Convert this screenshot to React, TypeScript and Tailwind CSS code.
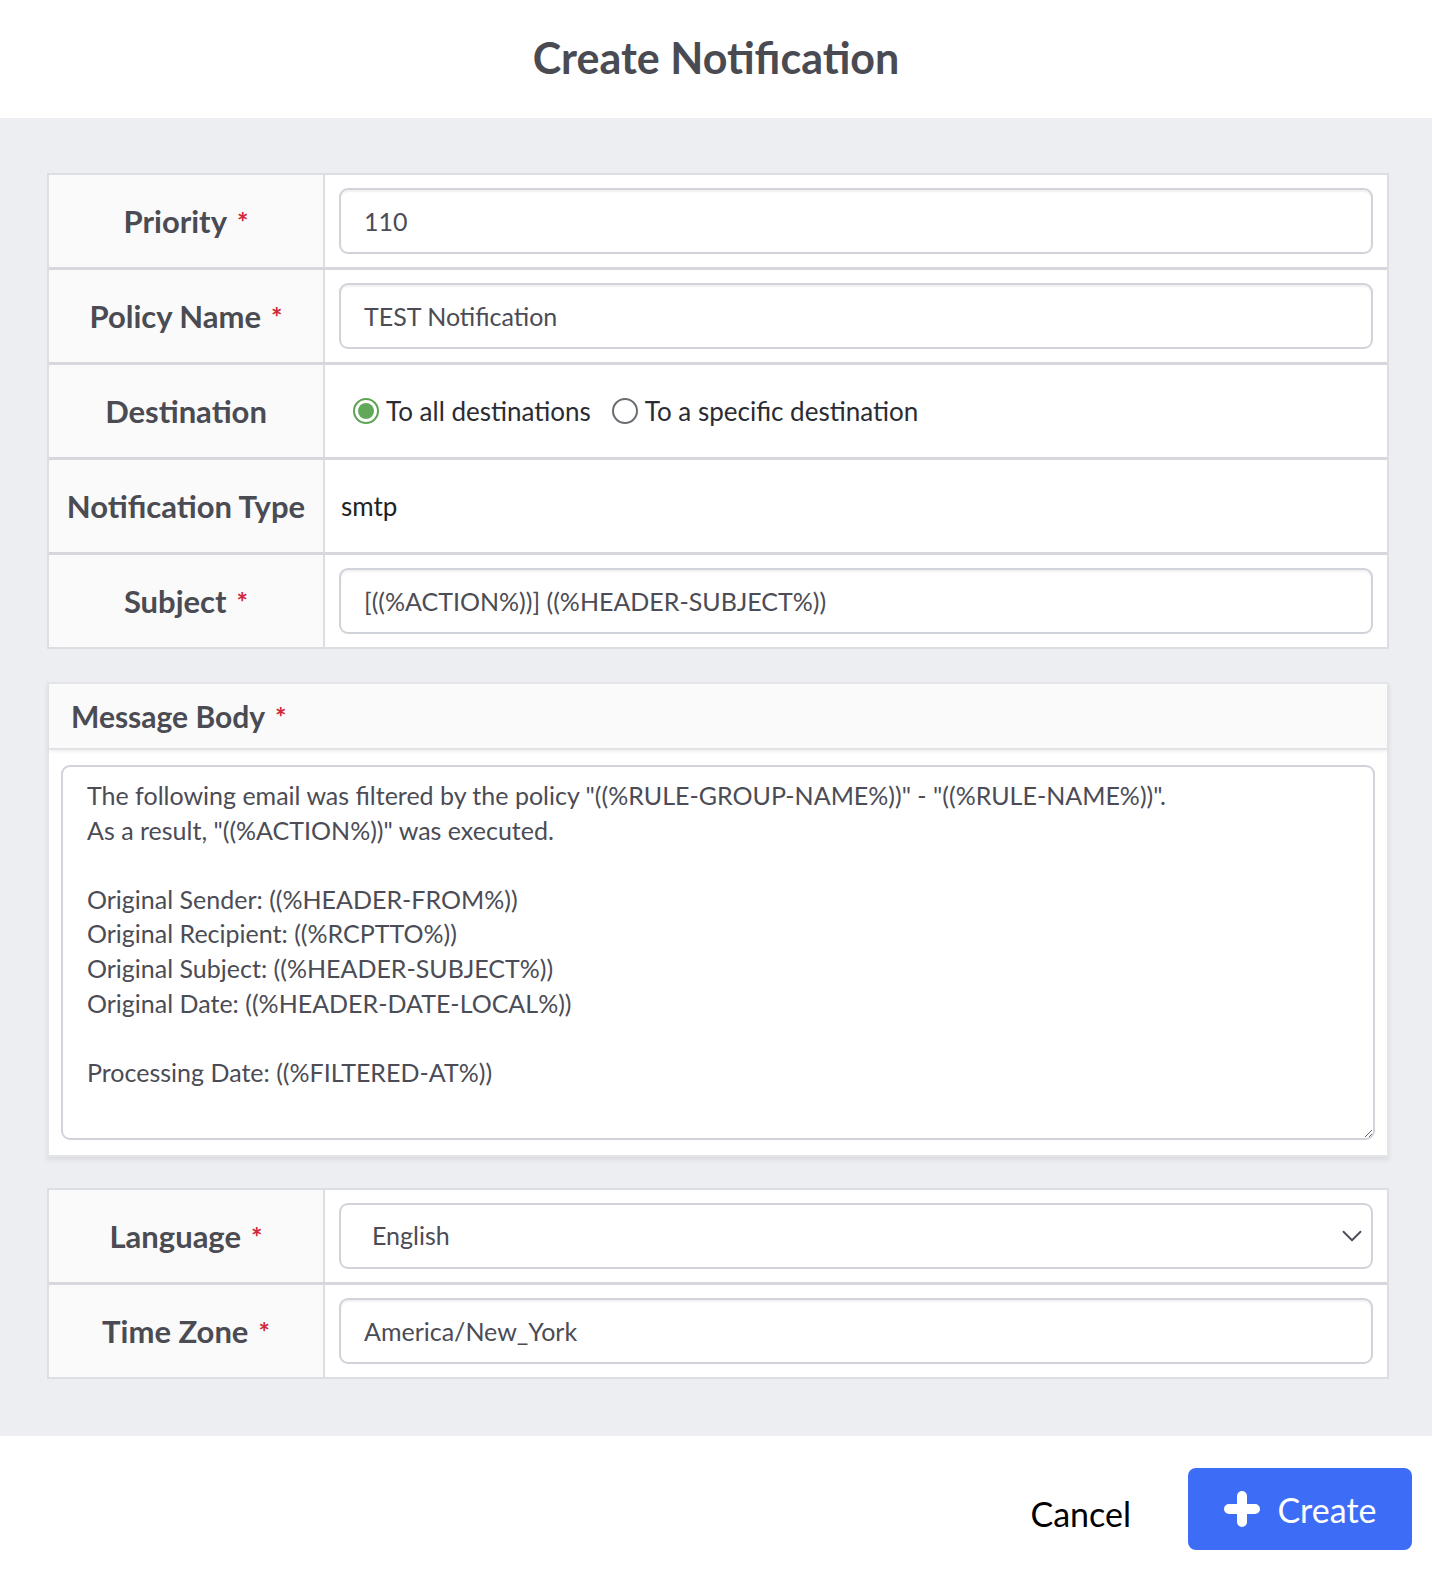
import React from "react";
import { ChevronDown } from "lucide-react";

const Req = () => <span className="ml-[10px] text-[#d0283a] align-top text-[27px] leading-none">*</span>;

const Label = ({ text, required }: { text: string; required?: boolean }) => (
  <div className="flex items-center justify-center bg-[#fafafa] border-r-2 border-[#dcdee3] text-[31px] font-bold text-[#4a4b53]">
    <span>{text}</span>
    {required && <Req />}
  </div>
);

const TextInput = ({ value }: { value: string }) => (
  <div className="flex items-center px-[14px]">
    <input
      defaultValue={value}
      className="w-full h-[66px] rounded-[9px] border-2 border-[#d0d3d9] bg-white px-[23px] text-[25px] text-[#4b4c55] shadow-[inset_0_2px_2px_rgba(0,0,0,0.06)] outline-none"
    />
  </div>
);

const Row = ({ children, last }: { children: React.ReactNode; last?: boolean }) => (
  <div className={`grid grid-cols-[276px_1fr] ${last ? "h-[92px]" : "h-[95px] border-b-[3px] border-[#d6d8dd]"}`}>
    {children}
  </div>
);

const Radio = ({ checked, label }: { checked?: boolean; label: string }) => (
  <label className="flex items-center gap-[7px] text-[26px] text-[#2b2c33]">
    <span
      className={`flex h-[26px] w-[26px] items-center justify-center rounded-full border-2 ${
        checked ? "border-[#5da354]" : "border-[#6b6c72]"
      }`}
    >
      {checked && <span className="h-[16px] w-[16px] rounded-full bg-[#62a85a]" />}
    </span>
    {label}
  </label>
);

const bodyText = `The following email was filtered by the policy "((%RULE-GROUP-NAME%))" - "((%RULE-NAME%))".
As a result, "((%ACTION%))" was executed.

Original Sender: ((%HEADER-FROM%))
Original Recipient: ((%RCPTTO%))
Original Subject: ((%HEADER-SUBJECT%))
Original Date: ((%HEADER-DATE-LOCAL%))

Processing Date: ((%FILTERED-AT%))`;

export default function App() {
  return (
    <div className="min-h-screen bg-white font-['Lato',sans-serif]">
      <header className="flex h-[118px] items-center justify-center pb-[2px]">
        <h1 className="text-[43px] font-bold text-[#4a4b52]">Create Notification</h1>
      </header>

      <main className="bg-[#edeef2] pl-[47px] pr-[43px] pt-[55px] pb-[57px]">
        <div className="border-2 border-[#dcdee3] bg-white">
          <Row>
            <Label text="Priority" required />
            <TextInput value="110" />
          </Row>
          <Row>
            <Label text="Policy Name" required />
            <TextInput value="TEST Notification" />
          </Row>
          <Row>
            <Label text="Destination" />
            <div className="flex items-center gap-[21px] pl-[28px]">
              <Radio checked label="To all destinations" />
              <Radio label="To a specific destination" />
            </div>
          </Row>
          <Row>
            <Label text="Notification Type" />
            <div className="flex items-center pl-[16px] text-[26px] text-[#222]">smtp</div>
          </Row>
          <Row last>
            <Label text="Subject" required />
            <TextInput value="[((%ACTION%))] ((%HEADER-SUBJECT%))" />
          </Row>
        </div>

        <div className="mt-[33px] border-2 border-[#e3e5e9] bg-white shadow-[0_3px_5px_rgba(0,0,0,0.08)]">
          <div className="flex h-[66px] items-center border-b-2 border-[#e0e2e6] bg-[#fafafa] pl-[22px] text-[30px] font-bold text-[#4a4b53] shadow-[0_2px_3px_rgba(0,0,0,0.06)]">
            Message Body
            <Req />
          </div>
          <div className="px-[12px] pt-[15px] pb-[15px]">
            <textarea
              defaultValue={bodyText}
              className="block h-[375px] w-full resize-y rounded-[9px] border-2 border-[#d0d3d9] px-[24px] pt-[11px] text-[25px] leading-[34.6px] text-[#4b4c55] outline-none"
            />
          </div>
        </div>

        <div className="mt-[31px] border-2 border-[#dcdee3] bg-white">
          <Row>
            <Label text="Language" required />
            <div className="relative flex items-center px-[14px]">
              <select className="h-[66px] w-full appearance-none rounded-[9px] border-2 border-[#d0d3d9] bg-white px-[31px] text-[25px] text-[#4b4c55] outline-none">
                <option>English</option>
              </select>
              <ChevronDown className="pointer-events-none absolute right-[18px] h-[34px] w-[34px] text-[#4b4c55]" strokeWidth={1.3} />
            </div>
          </Row>
          <Row last>
            <Label text="Time Zone" required />
            <TextInput value="America/New_York" />
          </Row>
        </div>
      </main>

      <footer className="flex h-[137px] items-start justify-end gap-[57px] pt-[32px] pr-[20px]">
        <button className="mt-[20px] text-[34px] text-black">Cancel</button>
        <button className="flex h-[82px] w-[224px] items-center justify-center gap-[18px] rounded-[8px] bg-[#3d6df6] text-[34px] text-white">
          <svg width="36" height="36" viewBox="0 0 36 36">
            <path d="M18 5v26M5 18h26" stroke="white" strokeWidth="10" strokeLinecap="round" />
          </svg>
          Create
        </button>
      </footer>
    </div>
  );
}
